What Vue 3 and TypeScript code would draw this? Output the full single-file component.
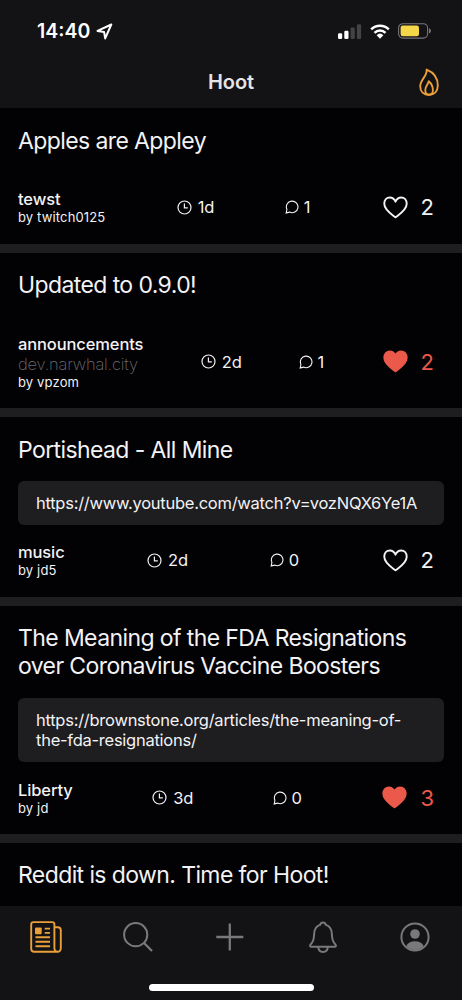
<script setup lang="ts">
interface Post {
  title: string
  link?: string
  community: string
  host?: string
  author: string
  age: string
  comments: number
  likes: number
  liked: boolean
}

const posts: Post[] = [
  { title: 'Apples are Appley', community: 'tewst', author: 'twitch0125', age: '1d', comments: 1, likes: 2, liked: false },
  { title: 'Updated to 0.9.0!', community: 'announcements', host: 'dev.narwhal.city', author: 'vpzom', age: '2d', comments: 1, likes: 2, liked: true },
  { title: 'Portishead - All Mine', link: 'https://www.youtube.com/watch?v=vozNQX6Ye1A', community: 'music', author: 'jd5', age: '2d', comments: 0, likes: 2, liked: false },
  { title: 'The Meaning of the FDA Resignations over Coronavirus Vaccine Boosters', link: 'https://brownstone.org/articles/the-meaning-of-the-fda-resignations/', community: 'Liberty', author: 'jd', age: '3d', comments: 0, likes: 3, liked: true },
]
const nextTitle = 'Reddit is down. Time for Hoot!'
</script>

<template>
  <div class="phone">
    <header class="top">
      <div class="status">
        <div class="clock-area">
          <span class="time">14:40</span>
          <svg class="locate" viewBox="0 0 17 17"><path d="M15.3 1.5 1.5 7.9l6.6 1.2 1.1 6.3z" /></svg>
        </div>
        <div class="signals">
          <svg width="24" height="17" viewBox="0 0 24 17">
            <rect x="0" y="10.3" width="4.2" height="5.7" rx="1.2" fill="#fff" />
            <rect x="6.3" y="7.8" width="4.2" height="8.2" rx="1.2" fill="#fff" />
            <rect x="12.6" y="4.6" width="4.2" height="11.4" rx="1.2" fill="#434245" />
            <rect x="18.9" y="1.2" width="4.2" height="14.8" rx="1.2" fill="#434245" />
          </svg>
          <svg class="wifi" width="20" height="15" viewBox="0 0 20 15">
            <path d="M1.2 5.4a12.6 12.6 0 0 1 17.6 0M4.5 8.8a7.9 7.9 0 0 1 11 0" fill="none" stroke="#fff" stroke-width="2.5" />
            <path d="M6.6 11.2a5 5 0 0 1 6.8 0L10 14.8z" fill="#fff" />
          </svg>
          <svg class="battery" width="33" height="16" viewBox="0 0 33 16">
            <rect x=".6" y=".7" width="29" height="14.4" rx="4.3" fill="none" stroke="#77767a" stroke-width="1.1" />
            <rect x="2.6" y="2.6" width="18.4" height="10.7" rx="2.2" fill="#f4d849" />
            <path d="M31 5.3q2 .7 2 2.6t-2 2.6z" fill="#77767a" />
          </svg>
        </div>
      </div>
      <div class="nav">
        <h1>Hoot</h1>
        <svg class="flame" viewBox="0 0 20 28">
          <path d="M7.6 1.6C8.6 8 1.2 11.5 1.2 18.2c0 5.3 3.5 8.5 8.8 8.5s8.8-3.4 8.8-9.2C18.8 9.8 14.5 4.3 7.6 1.6z" />
          <path d="M9.8 13.2c-.4 3-3.5 4.9-3.5 8.7 0 3 1.4 4.8 3.7 4.8s3.9-1.8 3.9-4.8c0-3.5-1.7-6.5-4.1-8.7z" />
        </svg>
      </div>
    </header>

    <main class="feed">
      <article v-for="post in posts" :key="post.title" class="post">
        <h2>{{ post.title }}</h2>
        <div v-if="post.link" class="link">{{ post.link }}</div>
        <div class="meta" :class="{ spaced: !post.link }">
          <div class="source">
            <div class="community">{{ post.community }}</div>
            <div v-if="post.host" class="host">{{ post.host }}</div>
            <div class="author">by {{ post.author }}</div>
          </div>
          <div class="age">
            <svg viewBox="0 0 15 15"><circle cx="7.5" cy="7.5" r="6.5" /><path d="M7.4 3.5v4.3h3.4" /></svg>
            <span>{{ post.age }}</span>
          </div>
          <div class="comments">
            <svg viewBox="0 0 14 14"><path d="M1.2 12.9 1.9 9.3A5.8 5.8 0 1 1 4.6 12.1z" /></svg>
            <span>{{ post.comments }}</span>
          </div>
          <div class="likes" :class="{ liked: post.liked }">
            <svg viewBox="0 0 26 24"><path d="M13 22.3C8.8 18.9 1.3 14.6 1.3 8.1 1.3 4.3 3.7 1.5 7.1 1.5c2.6 0 4.7 1.4 5.9 4.4 1.2-3 3.3-4.4 5.9-4.4 3.4 0 5.8 2.8 5.8 6.6 0 6.5-7.5 10.8-11.7 14.2z" /></svg>
            <span>{{ post.likes }}</span>
          </div>
        </div>
      </article>
      <article class="post"><h2>{{ nextTitle }}</h2></article>
    </main>

    <footer class="bottom">
      <nav class="tabs">
        <svg class="active" viewBox="0 0 32 32">
          <path d="M24.4 6.2h3.4a3 3 0 0 1 3 3v18.4a3.2 3.2 0 0 1-6.4 0V3.4a2.3 2.3 0 0 0-2.3-2.3H3.5a2.3 2.3 0 0 0-2.3 2.3v24.4a3 3 0 0 0 3 3h23.4" fill="none" stroke="currentColor" stroke-width="1.9" />
          <rect x="5" y="6.5" width="6.7" height="6.7" rx="1" fill="currentColor" />
          <path d="M14.7 7.6H20M14.7 11.9H20M5.5 16.2H20M5.5 20.7H20M5.5 25.2H20" stroke="currentColor" stroke-width="1.9" />
        </svg>
        <svg viewBox="0 0 32 32"><circle cx="13.7" cy="13.7" r="11.6" /><path d="m22 22 8 8" stroke-width="2.3" /></svg>
        <svg viewBox="0 0 32 32"><path d="M14.8 2.5v27M1.3 16h27" stroke-width="2.3" /></svg>
        <svg viewBox="0 0 32 32">
          <path d="M16 1.6c-1.8 0-2.6 1.2-2.9 2.3-4 1.2-5.7 4.7-5.9 8.6-.3 5.9-.8 7.6-3.7 11.1-.9 1.2-.4 2.2.8 2.2h23.4c1.2 0 1.7-1 .8-2.2-2.9-3.5-3.4-5.2-3.7-11.1-.2-3.9-1.9-7.4-5.9-8.6-.3-1.1-1.1-2.3-2.9-2.3zM11.2 26c.3 3.2 2 5 4.8 5s4.5-1.8 4.8-5" />
        </svg>
        <svg viewBox="0 0 32 32">
          <circle cx="16" cy="16" r="13.6" />
          <circle cx="16" cy="13" r="4.8" fill="currentColor" stroke="none" />
          <path d="M7.2 25.3C8.5 21.9 11.8 20.2 16 20.2s7.5 1.7 8.8 5.1A12.6 12.6 0 0 1 16 29a12.6 12.6 0 0 1-8.8-3.7z" fill="currentColor" stroke="none" />
        </svg>
      </nav>
      <div class="home"></div>
    </footer>
  </div>
</template>

<style>
body { margin: 0; background: #000; }
</style>

<style scoped>
.phone {
  width: 462px;
  height: 1000px;
  display: flex;
  flex-direction: column;
  overflow: hidden;
  background: #020103;
  color: #f3f2f4;
  font-family: Inter, "Liberation Sans", sans-serif;
}
h1, h2 { margin: 0; }
svg { display: block; flex: none; }
.top { flex: none; height: 108.3px; background: #131215; }
.status {
  height: 56px;
  padding: 6px 31px 0 37px;
  box-sizing: border-box;
  display: flex;
  justify-content: space-between;
  align-items: center;
}
.clock-area { display: flex; align-items: center; gap: 6px; }
.time { font-size: 19.5px; font-weight: 600; color: #fff; }
.locate { width: 17px; height: 17px; fill: none; stroke: #fff; stroke-width: 2; stroke-linejoin: round; }
.signals { display: flex; align-items: center; }
.wifi { margin-left: 8px; }
.battery { margin-left: 8px; }
.nav {
  height: 52px;
  display: grid;
  grid-template-columns: 1fr auto 1fr;
  align-items: center;
}
h1 { grid-column: 2; font-size: 20px; line-height: 24px; font-weight: 600; letter-spacing: -.1px; color: #e5e4e6; }
.flame {
  width: 20px;
  height: 28px;
  margin-right: 23px;
  justify-self: end;
  fill: none;
  stroke: #e9a03b;
  stroke-width: 1.9;
  stroke-linejoin: round;
}
.feed { flex: 1; min-height: 0; overflow: hidden; }
.post { padding: 18.5px 18px 18.35px; border-bottom: 9px solid #1e1d20; }
h2 { font-size: 23px; line-height: 28.2px; font-weight: 400; letter-spacing: -.6px; }
.link {
  margin-top: 17.6px;
  padding: 11.5px 18px;
  border-radius: 6px;
  background: #1e1d20;
  font-size: 16.5px;
  line-height: 20.5px;
  letter-spacing: -.26px;
}
.meta { margin-top: 17.4px; display: flex; align-items: center; justify-content: space-between; }
.meta.spaced { margin-top: 34.4px; }
.community { font-size: 16.5px; line-height: 20px; font-weight: 500; letter-spacing: -.12px; }
.host { font-size: 16.5px; line-height: 20px; font-weight: 200; letter-spacing: -.2px; color: #6d6c70; }
.author { font-size: 13px; line-height: 16px; letter-spacing: .15px; }
.age, .comments { display: flex; align-items: center; font-size: 16.5px; line-height: 20px; letter-spacing: -.2px; }
.age svg { width: 15px; height: 15px; margin-right: 6px; fill: none; stroke: currentColor; stroke-width: 1.2; }
.comments { margin-right: 1px; }
.comments svg { width: 14px; height: 14px; margin-right: 4.5px; fill: none; stroke: currentColor; stroke-width: 1.1; }
.likes { display: flex; align-items: center; margin-right: 10px; font-size: 22px; line-height: 26px; }
.likes svg { width: 25px; height: 23px; margin-right: 13px; fill: none; stroke: currentColor; stroke-width: 2; stroke-linejoin: round; }
.likes.liked { color: #eb594a; }
.likes.liked svg { fill: currentColor; }
.bottom { flex: none; height: 94px; background: #131215; }
.tabs { height: 62px; display: flex; align-items: center; justify-content: space-between; padding: 0 31px 0 30px; }
.tabs svg { width: 32px; height: 32px; color: #79787b; fill: none; stroke: currentColor; stroke-width: 2; }
.tabs svg.active { color: #e9a03b; stroke: none; }
.home { width: 165px; height: 6.5px; margin: 16.4px auto 0; border-radius: 4px; background: #fff; }
</style>
